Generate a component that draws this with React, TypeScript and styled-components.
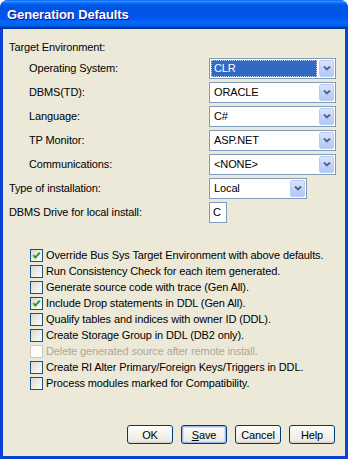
import React from 'react';
import styled, { createGlobalStyle } from 'styled-components';

const GlobalStyle = createGlobalStyle`
  html, body {
    margin: 0;
    padding: 0;
    background: #ffffff;
  }
  body {
    font-family: "Liberation Sans", Arial, sans-serif;
    font-size: 11px;
    letter-spacing: -0.12px;
    color: #000000;
  }
`;

const Window = styled.div`
  width: 348px;
  height: 459px;
  display: flex;
  flex-direction: column;
  box-sizing: border-box;
  border-radius: 8px 8px 0 0;
  overflow: hidden;
  background: #0842d6;
`;

const TitleBar = styled.div`
  height: 29px;
  flex: none;
  display: flex;
  align-items: center;
  padding: 0 7px;
  box-sizing: border-box;
  background: linear-gradient(
    to bottom,
    #0058ee 0%,
    #3593ff 4%,
    #288eff 6%,
    #127dff 8%,
    #036ffc 10%,
    #0262ee 14%,
    #0057e5 20%,
    #0054e3 24%,
    #0055eb 56%,
    #005bf5 66%,
    #026afe 76%,
    #0062ef 86%,
    #0052d6 92%,
    #0040ab 94%,
    #003092 100%
  );
`;

const Title = styled.span`
  font-family: "Liberation Sans", Arial, sans-serif;
  font-weight: bold;
  font-size: 13px;
  color: #ffffff;
  text-shadow: 1px 1px #0f1089;
  letter-spacing: -0.1px;
`;

const Client = styled.div`
  flex: 1;
  margin: 0 3px 3px 3px;
  background: #ece9d8;
  padding: 8px 10px 12px 6px;
  display: flex;
  flex-direction: column;
`;

const Heading = styled.div`
  height: 19px;
  display: flex;
  align-items: center;
`;

const FieldRow = styled.div<{ $indent?: boolean }>`
  height: 24px;
  display: grid;
  grid-template-columns: 200px 1fr;
  align-items: center;
  & > span {
    padding-left: ${({ $indent }) => ($indent ? '20px' : '0')};
  }
`;

const Combo = styled.div<{ $width: number }>`
  width: ${({ $width }) => $width}px;
  height: 21px;
  box-sizing: border-box;
  border: 1px solid #7f9db9;
  background: #ffffff;
  display: flex;
  align-items: center;
  padding: 1px;
`;

const ComboValue = styled.div<{ $selected?: boolean }>`
  flex: 1;
  height: 17px;
  display: flex;
  align-items: center;
  padding-left: 2px;
  box-sizing: border-box;
  background: ${({ $selected }) => ($selected ? '#316ac5' : 'transparent')};
  color: ${({ $selected }) => ($selected ? '#ffffff' : '#000000')};
  border: 1px dotted ${({ $selected }) => ($selected ? '#c4d0ea' : 'transparent')};
  margin-right: 2px;
`;

const ArrowButton = styled.div`
  width: 15px;
  height: 17px;
  box-sizing: border-box;
  border: 1px solid #bccbf2;
  border-radius: 2px;
  background: linear-gradient(to bottom, #dbe6fd 0%, #c3d3fb 50%, #b4c7f6 100%);
  display: flex;
  align-items: center;
  justify-content: center;
`;

const TextBox = styled.div`
  width: 18px;
  height: 21px;
  box-sizing: border-box;
  border: 1px solid #7f9db9;
  background: #ffffff;
  display: flex;
  align-items: center;
  padding-left: 3px;
`;

const CheckList = styled.div`
  margin-top: 23px;
  padding-left: 21px;
  display: flex;
  flex-direction: column;
`;

const CheckRow = styled.div<{ $disabled?: boolean }>`
  height: 16px;
  display: flex;
  align-items: center;
  gap: 3px;
  color: ${({ $disabled }) => ($disabled ? '#aca899' : '#000000')};
`;

const Box = styled.div<{ $disabled?: boolean }>`
  width: 13px;
  height: 13px;
  box-sizing: border-box;
  border: 1px solid ${({ $disabled }) => ($disabled ? '#cac8bb' : '#1c5180')};
  background: ${({ $disabled }) =>
    $disabled ? '#ffffff' : 'linear-gradient(135deg, #d8d8d2 0%, #ecece6 50%, #ffffff 100%)'};
  display: flex;
  align-items: center;
  justify-content: center;
`;

const Spacer = styled.div`
  flex: 1;
`;

const ButtonBar = styled.div`
  display: flex;
  justify-content: flex-end;
  gap: 8px;
`;

const Button = styled.div<{ $default?: boolean }>`
  width: 46px;
  height: 19px;
  box-sizing: border-box;
  border: 1px solid #003c74;
  border-radius: 3px;
  background: linear-gradient(to bottom, #ffffff 0%, #f5f4ef 40%, #ecebe6 85%, #d6d0c5 100%);
  box-shadow: ${({ $default }) =>
    $default ? 'inset 0 0 0 1px #9bb7e8, inset 0 0 0 2px #cee0fb' : 'none'};
  display: flex;
  align-items: center;
  justify-content: center;
`;

const Underline = styled.span`
  text-decoration: underline;
`;

function ChevronDown() {
  return (
    <svg width="8" height="6" viewBox="0 0 8 6">
      <path d="M1 1.5 L4 4.5 L7 1.5" stroke="#4d6185" strokeWidth="1.8" fill="none" />
    </svg>
  );
}

function CheckMark() {
  return (
    <svg width="9" height="9" viewBox="0 0 9 9">
      <path d="M1.2 4.2 L3.4 6.5 L7.8 1.6" stroke="#21a121" strokeWidth="1.9" fill="none" />
    </svg>
  );
}

interface ComboFieldProps {
  value: string;
  width?: number;
  selected?: boolean;
}

function ComboField({ value, width = 127, selected }: ComboFieldProps) {
  return (
    <Combo $width={width}>
      <ComboValue $selected={selected}>{value}</ComboValue>
      <ArrowButton>
        <ChevronDown />
      </ArrowButton>
    </Combo>
  );
}

const targetFields = [
  { label: 'Operating System:', value: 'CLR', selected: true },
  { label: 'DBMS(TD):', value: 'ORACLE' },
  { label: 'Language:', value: 'C#' },
  { label: 'TP Monitor:', value: 'ASP.NET' },
  { label: 'Communications:', value: '<NONE>' },
];

const options = [
  { text: 'Override Bus Sys Target Environment with above defaults.', checked: true },
  { text: 'Run Consistency Check for each item generated.' },
  { text: 'Generate source code with trace (Gen All).' },
  { text: 'Include Drop statements in DDL (Gen All).', checked: true },
  { text: 'Qualify tables and indices with owner ID (DDL).' },
  { text: 'Create Storage Group in DDL (DB2 only).' },
  { text: 'Delete generated source after remote install.', disabled: true },
  { text: 'Create RI Alter Primary/Foreign Keys/Triggers in DDL.' },
  { text: 'Process modules marked for Compatibility.' },
];

export default function App() {
  return (
    <>
      <GlobalStyle />
      <Window>
        <TitleBar>
          <Title>Generation Defaults</Title>
        </TitleBar>
        <Client>
          <Heading>Target Environment:</Heading>
          {targetFields.map((f) => (
            <FieldRow $indent key={f.label}>
              <span>{f.label}</span>
              <ComboField value={f.value} selected={f.selected} />
            </FieldRow>
          ))}
          <FieldRow>
            <span>Type of installation:</span>
            <ComboField value="Local" width={98} />
          </FieldRow>
          <FieldRow>
            <span>DBMS Drive for local install:</span>
            <TextBox>C</TextBox>
          </FieldRow>
          <CheckList>
            {options.map((o) => (
              <CheckRow key={o.text} $disabled={o.disabled}>
                <Box $disabled={o.disabled}>{o.checked && <CheckMark />}</Box>
                <span>{o.text}</span>
              </CheckRow>
            ))}
          </CheckList>
          <Spacer />
          <ButtonBar>
            <Button>OK</Button>
            <Button $default>
              <span>
                <Underline>S</Underline>ave
              </span>
            </Button>
            <Button>Cancel</Button>
            <Button>Help</Button>
          </ButtonBar>
        </Client>
      </Window>
    </>
  );
}
